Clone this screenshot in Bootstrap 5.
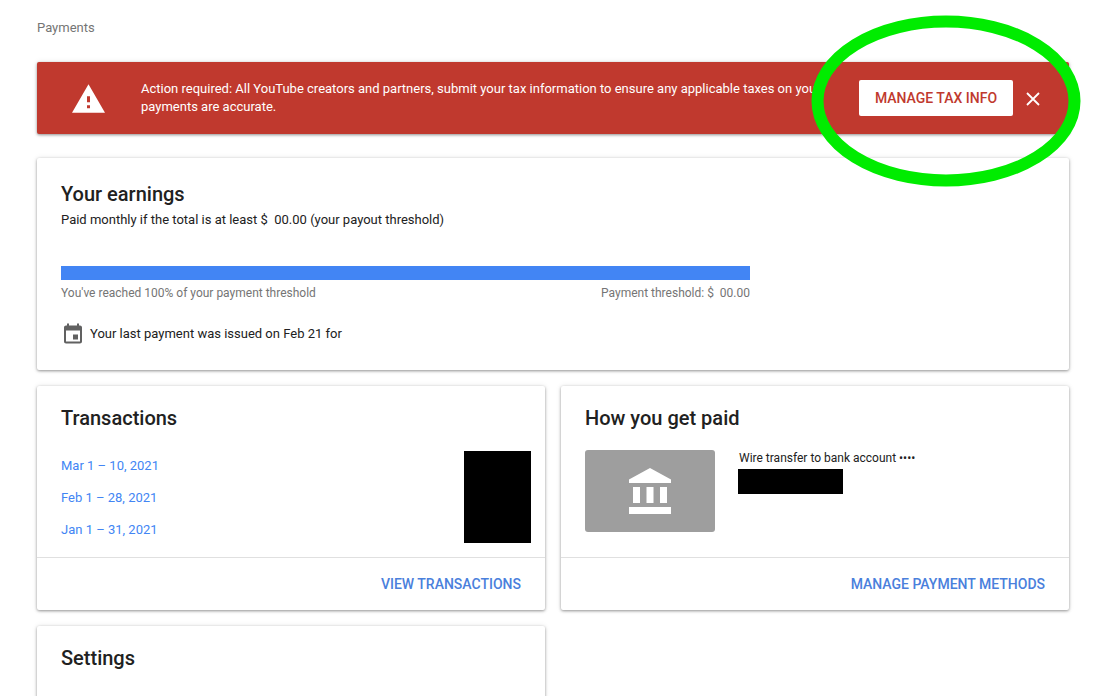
<!DOCTYPE html>
<html lang="en">
<head>
<meta charset="utf-8">
<title>Payments</title>
<link href="https://cdn.jsdelivr.net/npm/bootstrap@5.3.0/dist/css/bootstrap.min.css" rel="stylesheet">
<style>
html, body { height: 696px; overflow: hidden; background: #fff; }
body { font-family: Roboto, "Liberation Sans", sans-serif; color: #212121; font-size: 13px; position: relative; }
.page-wrap { padding: 0 32px 0 37px; }
.crumb { font-size: 13px; line-height: 16px; color: #757575; padding-top: 20px; margin-bottom: 26px; }
.shadow-box { box-shadow: 0 1px 3px rgba(0,0,0,.4), 0 0 6px rgba(0,0,0,.08); border-radius: 2px; background: #fff; border: 0; }
.tax-banner { background: #c0392e; color: #fff; height: 72px; margin-bottom: 24px; }
.warn-slot { width: 104px; padding-left: 35px; flex: none; }
.warn-slot svg { display: block; }
.tax-text { font-size: 13px; line-height: 18px; font-weight: 400; white-space: nowrap; flex: 1 1 0; min-width: 0; }
.tax-btn { background: #fff; color: #c0392e; font-size: 14px; font-weight: 500; line-height: 16px; padding: 10px 0; border: 0; border-radius: 2px; height: 36px; width: 154px; white-space: nowrap; margin-left: 46px; position: relative; }
.tax-btn:hover { background: #fff; color: #c0392e; }
.x-btn { background: none; border: 0; padding: 0; width: 16px; height: 16px; margin: -4px 28px 0 12px; display: block; flex: none; }
.earn-card { height: 212px; margin-bottom: 16px; padding: 24px; }
.sec-title { font-size: 20px; line-height: 24px; font-weight: 500; color: #212121; margin: 0; }
.earn-sub { font-size: 13px; line-height: 16px; margin-top: 6px; }
.bar-track { width: 689px; height: 14px; background: #4285f4; margin-top: 38px; }
.bar-notes { width: 689px; font-size: 12px; line-height: 14px; color: #757575; margin-top: 6px; }
.pay-line { font-size: 13px; line-height: 16px; margin-top: 23px; padding-left: 3px; }
.pay-line svg { flex: none; margin-right: 8px; }
.pair-row { --bs-gutter-x: 16px; --bs-gutter-y: 0; margin-bottom: 16px; }
.low-card { height: 224px; position: relative; }
.low-body { height: 171px; padding: 20px 14px 0 24px; }
.low-foot { height: 53px; border-top: 1px solid #e0e0e0; padding: 0 24px; }
.foot-link { color: #4a80dc; font-size: 14px; font-weight: 500; text-decoration: none; line-height: 16px; }
.txn-links { font-size: 13px; line-height: 16px; margin-top: 28px; }
.txn-links a { color: #4285f4; text-decoration: none; display: block; margin-bottom: 16px; }
.redact-a { width: 67px; height: 92px; background: #000; margin-top: 45px; flex: none; }
.bank-tile { width: 130px; height: 82px; background: #9e9e9e; border-radius: 3px; flex: none; margin-top: 20px; }
.bank-info { margin: 21px 0 0 24px; font-size: 12px; line-height: 15px; }
.redact-b { width: 105px; height: 25px; background: #000; margin: 3px 0 0 -1px; }
.settings-card { height: 120px; padding: 20px 24px; }
.ring { position: absolute; left: 811px; top: 15px; width: 270px; height: 172px; pointer-events: none; }
</style>
</head>
<body>
<div class="page-wrap">
  <div class="crumb">Payments</div>

  <div class="tax-banner shadow-box d-flex align-items-center">
    <div class="warn-slot">
      <svg width="33" height="29" viewBox="1 2 22 19"><path fill="#fff" d="M1 21h22L12 2 1 21zm12-3h-2v-2h2v2zm0-4h-2v-4h2v4z"/></svg>
    </div>
    <div class="tax-text">Action required: All YouTube creators and partners, submit your tax information to ensure any applicable taxes on your<br>payments are accurate.</div>
    <button type="button" class="btn tax-btn">MANAGE TAX INFO</button>
    <button type="button" class="x-btn" aria-label="Close">
      <svg width="16" height="16" viewBox="0 0 16 16"><path d="M2 2l12 12M14 2L2 14" stroke="#fff" stroke-width="1.8" fill="none"/></svg>
    </button>
  </div>

  <div class="earn-card shadow-box">
    <h2 class="sec-title">Your earnings</h2>
    <div class="earn-sub">Paid monthly if the total is at least $&nbsp; 00.00 (your payout threshold)</div>
    <div class="bar-track"></div>
    <div class="bar-notes d-flex justify-content-between">
      <span>You've reached 100% of your payment threshold</span>
      <span>Payment threshold: $&nbsp; 00.00</span>
    </div>
    <div class="pay-line d-flex align-items-center">
      <svg width="18" height="21" viewBox="3 1 18 20"><path fill="#616161" d="M17 12h-5v5h5v-5zM16 1v2H8V1H6v2H5c-1.11 0-1.99.9-1.99 2L3 19c0 1.1.89 2 2 2h14c1.1 0 2-.9 2-2V5c0-1.1-.9-2-2-2h-1V1h-2zm3 18H5V8h14v11z"/></svg>
      <span>Your last payment was issued on Feb 21 for</span>
    </div>
  </div>

  <div class="row pair-row">
    <div class="col-6">
      <div class="low-card shadow-box">
        <div class="low-body d-flex justify-content-between">
          <div>
            <h2 class="sec-title">Transactions</h2>
            <div class="txn-links">
              <a href="#">Mar 1 – 10, 2021</a>
              <a href="#">Feb 1 – 28, 2021</a>
              <a href="#">Jan 1 – 31, 2021</a>
            </div>
          </div>
          <div class="redact-a"></div>
        </div>
        <div class="low-foot d-flex align-items-center justify-content-end"><a href="#" class="foot-link">VIEW TRANSACTIONS</a></div>
      </div>
    </div>
    <div class="col-6">
      <div class="low-card shadow-box">
        <div class="low-body">
          <h2 class="sec-title">How you get paid</h2>
          <div class="d-flex">
            <div class="bank-tile d-flex align-items-center justify-content-center">
              <svg width="42" height="46" viewBox="0 0 42 46"><path fill="#fff" d="M21 0L0 11.5V15h42v-3.5L21 0zM4 19v16h7V19H4zm13.5 0v16h7V19h-7zM31 19v16h7V19h-7zM0 39v7h42v-7H0z"/></svg>
            </div>
            <div class="bank-info">
              <div>Wire transfer to bank account ••••</div>
              <div class="redact-b"></div>
            </div>
          </div>
        </div>
        <div class="low-foot d-flex align-items-center justify-content-end"><a href="#" class="foot-link">MANAGE PAYMENT METHODS</a></div>
      </div>
    </div>
  </div>

  <div class="row pair-row">
    <div class="col-6">
      <div class="settings-card shadow-box"><h2 class="sec-title">Settings</h2></div>
    </div>
  </div>
</div>

<svg class="ring" viewBox="0 0 270 172"><ellipse cx="135" cy="86" rx="128.5" ry="79.5" fill="none" stroke="#00ec00" stroke-width="12"/></svg>
<script src="https://cdn.jsdelivr.net/npm/bootstrap@5.3.0/dist/js/bootstrap.bundle.min.js"></script>
</body>
</html>
